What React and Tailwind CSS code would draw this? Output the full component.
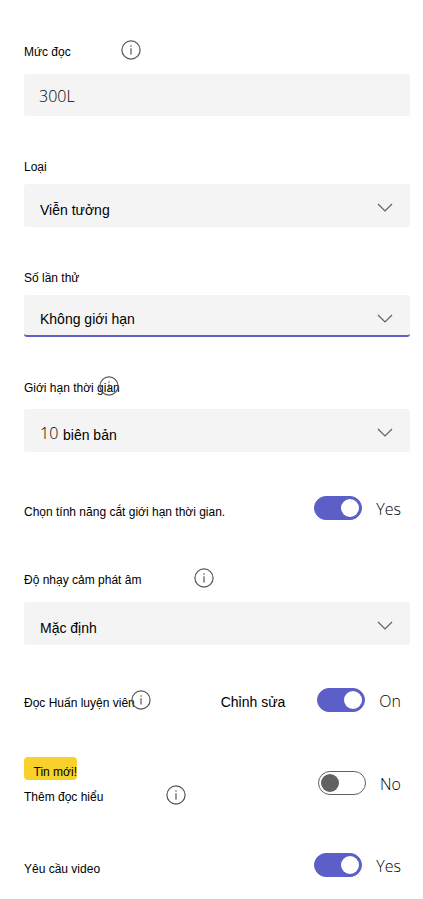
import { useState } from "react";

function InfoButton({ label }) {
  return (
    <button type="button" aria-label={label} className="relative size-5 shrink-0">
      <svg viewBox="0 0 20 20" className="size-5" fill="none">
        <circle cx="10" cy="10" r="9.1" stroke="#555555" strokeWidth="1.2" />
        <path d="M10 8.2V14.5" stroke="#555555" strokeWidth="1.2" />
        <circle cx="10" cy="6" r="0.8" fill="#555555" />
      </svg>
    </button>
  );
}

function FieldLabel({ htmlFor, className = "", children }) {
  return (
    <label
      htmlFor={htmlFor}
      className={`shrink-0 whitespace-nowrap pt-1 text-xs leading-4 ${className}`}
    >
      {children}
    </label>
  );
}

function SelectBox({ id, options, unit, active = false }) {
  return (
    <div
      className={`relative rounded-[3px] bg-[#f4f4f4] ${
        active ? "border-b-2 border-[#5b5fc7]" : ""
      }`}
    >
      <select
        id={id}
        className={`block w-full appearance-none bg-transparent pl-4 pr-12 outline-none ${
          active ? "h-10" : "h-[43px]"
        } ${
          unit
            ? "pt-1 font-['Open_Sans',sans-serif] text-base font-light text-black"
            : "pt-2 text-sm"
        }`}
      >
        {options.map((option) => (
          <option key={option}>{option}</option>
        ))}
      </select>
      {unit && (
        <span className="pointer-events-none absolute inset-y-0 left-[39px] flex items-center pt-2 text-sm">
          {unit}
        </span>
      )}
      <svg
        viewBox="0 0 16 9"
        fill="none"
        className="pointer-events-none absolute right-[17px] top-[19px] h-[9px] w-4"
      >
        <path d="M1 1L8 8L15 1" stroke="#616161" strokeWidth="1.2" />
      </svg>
    </div>
  );
}

function Toggle({ id, defaultChecked = false, on = "Yes", off = "No" }) {
  const [checked, setChecked] = useState(defaultChecked);

  return (
    <div className="ml-auto flex items-center gap-[14px] pr-[9px]">
      <input
        id={id}
        type="checkbox"
        role="switch"
        checked={checked}
        onChange={(e) => setChecked(e.target.checked)}
        className="flex h-6 w-12 shrink-0 appearance-none items-center rounded-full border border-[#616161] bg-white px-[2px] before:size-[18px] before:rounded-full before:bg-[#616161] checked:justify-end checked:border-[#5b5fc7] checked:bg-[#5b5fc7] checked:before:bg-white"
      />
      <span className="pt-0.5 font-['Open_Sans',sans-serif] text-base font-light leading-5 text-black">
        {checked ? on : off}
      </span>
    </div>
  );
}

export default function App() {
  return (
    <main className="bg-white pb-5 pl-6 pr-[13px] pt-10 font-['Liberation_Sans',Arial,sans-serif] text-black">
      <form onSubmit={(e) => e.preventDefault()}>
        <div>
          <div className="mb-[14px] flex h-5 items-center">
            <FieldLabel htmlFor="level" className="w-[97px]">
              Mức đọc
            </FieldLabel>
            <InfoButton label="Mức đọc" />
          </div>
          <input
            id="level"
            type="text"
            defaultValue="300L"
            className="block h-[42px] w-full rounded-[3px] bg-[#f4f4f4] px-[15px] pt-0.5 font-['Open_Sans',sans-serif] text-base font-light text-black outline-none"
          />
        </div>

        <div className="mt-[39px]">
          <div className="mb-[9px] flex h-5 items-center">
            <FieldLabel htmlFor="genre">Loại</FieldLabel>
          </div>
          <SelectBox id="genre" options={["Viễn tưởng", "Phi hư cấu"]} />
        </div>

        <div className="mt-[39px]">
          <div className="mb-[9px] flex h-5 items-center">
            <FieldLabel htmlFor="attempts">Số lần thử</FieldLabel>
          </div>
          <SelectBox id="attempts" options={["Không giới hạn", "1", "2", "3"]} active />
        </div>

        <div className="mt-[39px]">
          <div className="mb-[13px] flex h-5 items-center">
            <FieldLabel htmlFor="time" className="w-[75px]">
              Giới hạn thời gian
            </FieldLabel>
            <InfoButton label="Giới hạn thời gian" />
          </div>
          <SelectBox id="time" options={["10", "1", "5"]} unit="biên bản" />
        </div>

        <div className="mt-11 flex items-center">
          <FieldLabel htmlFor="trim" className="mt-1">
            Chọn tính năng cắt giới hạn thời gian.
          </FieldLabel>
          <Toggle id="trim" defaultChecked />
        </div>

        <div className="mt-12">
          <div className="mb-[14px] flex h-5 items-center">
            <FieldLabel htmlFor="sensitivity" className="w-[170px]">
              Độ nhạy cảm phát âm
            </FieldLabel>
            <InfoButton label="Độ nhạy cảm phát âm" />
          </div>
          <SelectBox id="sensitivity" options={["Mặc định", "Thấp", "Cao"]} />
        </div>

        <div className="mt-[43px] flex items-center">
          <FieldLabel htmlFor="coach" className="mt-0.5 w-[107px]">
            Đọc Huấn luyện viên
          </FieldLabel>
          <InfoButton label="Đọc Huấn luyện viên" />
          <div className="ml-auto flex items-center gap-8">
            <button type="button" className="pt-1 text-sm leading-5">
              Chỉnh sửa
            </button>
            <Toggle id="coach" defaultChecked on="On" off="Off" />
          </div>
        </div>

        <div className="mt-[45px] flex items-center">
          <div>
            <span className="flex h-[23px] w-[53px] items-end justify-end whitespace-nowrap rounded bg-[#f8d22a] text-xs leading-4">
              Tin mới!
            </span>
            <div className="mt-[5px] flex h-5 items-center">
              <FieldLabel htmlFor="comprehension" className="w-[142px]">
                Thêm đọc hiểu
              </FieldLabel>
              <InfoButton label="Thêm đọc hiểu" />
            </div>
          </div>
          <div className="ml-auto pt-1">
            <Toggle id="comprehension" />
          </div>
        </div>

        <div className="mt-12 flex items-center">
          <FieldLabel htmlFor="video" className="mt-1">
            Yêu cầu video
          </FieldLabel>
          <Toggle id="video" defaultChecked />
        </div>
      </form>
    </main>
  );
}
